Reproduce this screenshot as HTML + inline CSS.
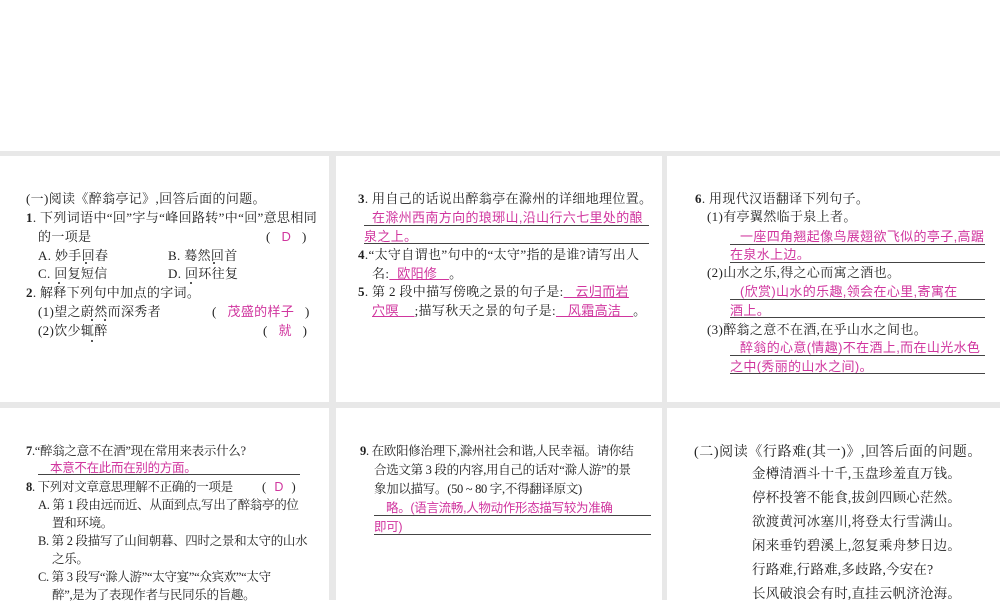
<!DOCTYPE html><html><head><meta charset="utf-8"><style>
body{margin:0;width:1000px;height:600px;position:relative;background:#fff;overflow:hidden;font-family:"Liberation Serif","Noto Serif CJK SC",serif;font-size:13px;letter-spacing:0.35px;color:#222}
.g{position:absolute;background:#e8e8e8}
.c{position:absolute;background:#fff}
.l{position:absolute;white-space:nowrap;line-height:16px}
.p{color:#d0359e;font-family:"Liberation Sans","Noto Sans CJK SC",sans-serif}
.u{position:absolute;border-bottom:1px solid #444;height:0}
.d{position:absolute;width:2px;height:2px;background:#222;border-radius:1px}
.k{font-size:13.5px;letter-spacing:0.2px}
.r{font-size:12.5px;letter-spacing:-0.3px}
</style></head><body>
<div class="g" style="left:0;top:151px;width:1000px;height:449px"></div>
<div class="c" style="left:0;top:156px;width:329px;height:246px"></div>
<div class="c" style="left:336px;top:156px;width:326px;height:246px"></div>
<div class="c" style="left:667px;top:156px;width:333px;height:246px"></div>
<div class="c" style="left:0;top:408px;width:329px;height:192px"></div>
<div class="c" style="left:336px;top:408px;width:326px;height:192px"></div>
<div class="c" style="left:667px;top:408px;width:333px;height:192px"></div>

<div class="l" style="left:26px;top:191px">(一)阅读《醉翁亭记》,回答后面的问题。</div>
<div class="l" style="left:26px;top:210px"><b>1</b>. 下列词语中“回”字与“峰回路转”中“回”意思相同</div>
<div class="l" style="left:38px;top:229px">的一项是</div>
<div class="l" style="left:266px;top:229px">( &nbsp;&nbsp;<span class="p">D</span>&nbsp;&nbsp; )</div>
<div class="l" style="left:38px;top:248px">A. 妙手回春</div><div class="l" style="left:168px;top:248px">B. 蓦然回首</div>
<div class="l" style="left:38px;top:266px">C. 回复短信</div><div class="l" style="left:168px;top:266px">D. 回环往复</div>
<div class="l" style="left:26px;top:285px"><b>2</b>. 解释下列句中加点的字词。</div>
<div class="l" style="left:38px;top:304px">(1)望之蔚然而深秀者</div>
<div class="l" style="left:212px;top:304px">( &nbsp;&nbsp;<span class="p">茂盛的样子</span>&nbsp;&nbsp; )</div>
<div class="l" style="left:38px;top:323px">(2)饮少辄醉</div>
<div class="l" style="left:263px;top:323px">( &nbsp;&nbsp;<span class="p">就</span>&nbsp;&nbsp; )</div>
<div class="d" style="left:85px;top:262px"></div><div class="d" style="left:213px;top:262px"></div>
<div class="d" style="left:58px;top:282px"></div><div class="d" style="left:190px;top:282px"></div>
<div class="d" style="left:91px;top:319px"></div><div class="d" style="left:104px;top:319px"></div>
<div class="d" style="left:91px;top:340px"></div>

<div class="l" style="left:358px;top:191px"><b>3</b>. 用自己的话说出醉翁亭在滁州的详细地理位置。</div>
<div class="l p" style="left:372px;top:210px">在滁州西南方向的琅琊山,沿山行六七里处的酿</div>
<div class="u" style="left:364px;top:225px;width:285px"></div>
<div class="l p" style="left:364px;top:229px">泉之上。</div>
<div class="u" style="left:364px;top:243px;width:285px"></div>
<div class="l" style="left:358px;top:247px"><b>4</b>.“太守自谓也”句中的“太守”指的是谁?请写出人</div>
<div class="l" style="left:372px;top:266px">名:<span class="p" style="text-decoration:underline">&nbsp;&nbsp;欧阳修&nbsp;&nbsp;&nbsp;</span>。</div>
<div class="l" style="left:358px;top:284px"><b>5</b>. 第 2 段中描写傍晚之景的句子是:<span class="p" style="text-decoration:underline">&nbsp;&nbsp;&nbsp;云归而岩</span></div>
<div class="l" style="left:372px;top:303px"><span class="p" style="text-decoration:underline">穴暝&nbsp;&nbsp;&nbsp;&nbsp;</span>;描写秋天之景的句子是:<span class="p" style="text-decoration:underline">&nbsp;&nbsp;&nbsp;风霜高洁&nbsp;&nbsp;&nbsp;</span>。</div>

<div class="l" style="left:695px;top:191px"><b>6</b>. 用现代汉语翻译下列句子。</div>
<div class="l" style="left:707px;top:209px">(1)有亭翼然临于泉上者。</div>
<div class="l p" style="left:740px;top:229px">一座四角翘起像鸟展翅欲飞似的亭子,高踞</div>
<div class="u" style="left:730px;top:244px;width:255px"></div>
<div class="l p" style="left:730px;top:247px">在泉水上边。</div>
<div class="u" style="left:730px;top:262px;width:255px"></div>
<div class="l" style="left:707px;top:265px">(2)山水之乐,得之心而寓之酒也。</div>
<div class="l p" style="left:740px;top:284px">(欣赏)山水的乐趣,领会在心里,寄寓在</div>
<div class="u" style="left:730px;top:299px;width:255px"></div>
<div class="l p" style="left:730px;top:303px">酒上。</div>
<div class="u" style="left:730px;top:317px;width:255px"></div>
<div class="l" style="left:707px;top:322px">(3)醉翁之意不在酒,在乎山水之间也。</div>
<div class="l p" style="left:740px;top:340px">醉翁的心意(情趣)不在酒上,而在山光水色</div>
<div class="u" style="left:730px;top:355px;width:255px"></div>
<div class="l p" style="left:730px;top:359px">之中(秀丽的山水之间)。</div>
<div class="u" style="left:730px;top:373px;width:255px"></div>

<div class="l r" style="left:26px;top:443px"><b>7</b>.“醉翁之意不在酒”现在常用来表示什么?</div>
<div class="l p r" style="left:50px;top:460px">本意不在此而在别的方面。</div>
<div class="u" style="left:38px;top:474px;width:262px"></div>
<div class="l r" style="left:26px;top:479px"><b>8</b>. 下列对文章意思理解不正确的一项是</div>
<div class="l r" style="left:262px;top:479px">( &nbsp;&nbsp;<span class="p">D</span>&nbsp;&nbsp; )</div>
<div class="l r" style="left:38px;top:497px">A. 第 1 段由远而近、从面到点,写出了醉翁亭的位</div>
<div class="l r" style="left:52px;top:515px">置和环境。</div>
<div class="l r" style="left:38px;top:533px">B. 第 2 段描写了山间朝暮、四时之景和太守的山水</div>
<div class="l r" style="left:52px;top:551px">之乐。</div>
<div class="l r" style="left:38px;top:569px">C. 第 3 段写“滁人游”“太守宴”“众宾欢”“太守</div>
<div class="l r" style="left:52px;top:587px">醉”,是为了表现作者与民同乐的旨趣。</div>

<div class="l r" style="left:360px;top:443px"><b>9</b>. 在欧阳修治理下,滁州社会和谐,人民幸福。请你结</div>
<div class="l r" style="left:374px;top:462px">合选文第 3 段的内容,用自己的话对“滁人游”的景</div>
<div class="l r" style="left:374px;top:481px">象加以描写。(50 ~ 80 字,不得翻译原文)</div>
<div class="l p r" style="left:386px;top:500px">略。(语言流畅,人物动作形态描写较为准确</div>
<div class="u" style="left:374px;top:515px;width:277px"></div>
<div class="l p r" style="left:374px;top:519px">即可)</div>
<div class="u" style="left:374px;top:534px;width:277px"></div>

<div class="l" style="left:694px;top:445px;font-size:14px;letter-spacing:0.6px">(二)阅读《行路难(其一)》,回答后面的问题。</div>
<div class="l k" style="left:752px;top:466px">金樽清酒斗十千,玉盘珍羞直万钱。</div>
<div class="l k" style="left:752px;top:490px">停杯投箸不能食,拔剑四顾心茫然。</div>
<div class="l k" style="left:752px;top:514px">欲渡黄河冰塞川,将登太行雪满山。</div>
<div class="l k" style="left:752px;top:538px">闲来垂钓碧溪上,忽复乘舟梦日边。</div>
<div class="l k" style="left:752px;top:562px">行路难,行路难,多歧路,今安在?</div>
<div class="l k" style="left:752px;top:586px">长风破浪会有时,直挂云帆济沧海。</div>
</body></html>
